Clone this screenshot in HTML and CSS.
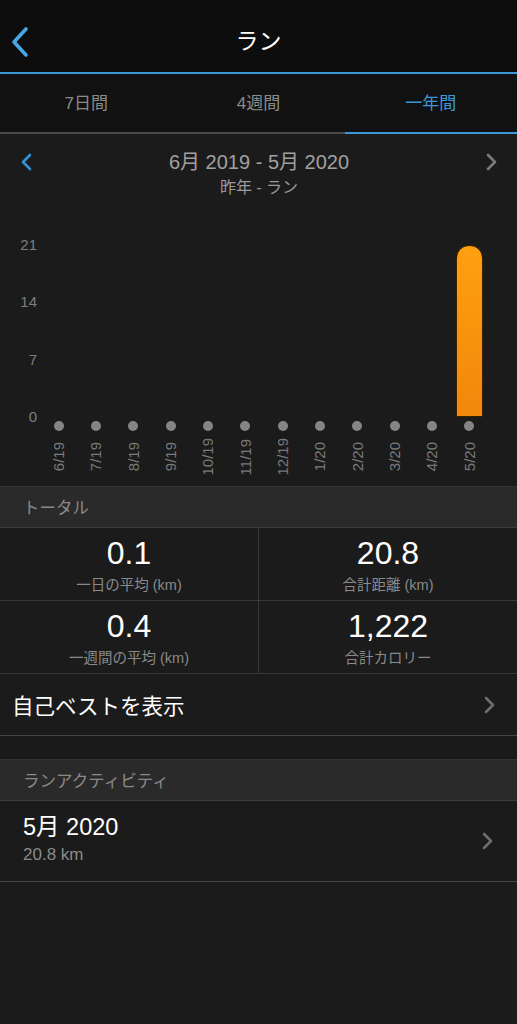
FILE: index.html
```html
<!DOCTYPE html>
<html lang="ja">
<head>
    <meta charset="UTF-8">
    <meta name="viewport" content="width=device-width, initial-scale=1.0">
    <title>ラン</title>
    <link rel="stylesheet" href="styles.css">
</head>
<body>
    <header class="top-bar">
        <svg class="back" width="20" height="32" viewBox="0 0 20 32"><path d="M16 3 L4 16 L16 29" fill="none" stroke="#46a6e8" stroke-width="3.6" stroke-linecap="round" stroke-linejoin="round"/></svg>
        <h1>ラン</h1>
        <span></span>
    </header>

    <nav class="tabs">
        <div class="tab">7日間</div>
        <div class="tab">4週間</div>
        <div class="tab active">一年間</div>
    </nav>

    <section class="chart-card">
        <div class="range">
            <svg width="14" height="20" viewBox="0 0 14 20"><path d="M10 3 L3 10 L10 17" fill="none" stroke="#2f93d6" stroke-width="2.6" stroke-linecap="round" stroke-linejoin="round"/></svg>
            <div class="range-text">
                <div class="range-title">6月 2019 - 5月 2020</div>
                <div class="range-sub">昨年 - ラン</div>
            </div>
            <svg width="14" height="20" viewBox="0 0 14 20"><path d="M4 3 L11 10 L4 17" fill="none" stroke="#7a7a7a" stroke-width="2.6" stroke-linecap="round" stroke-linejoin="round"/></svg>
        </div>

        <div class="chart">
            <div class="y-axis">
                <span>21</span>
                <span>14</span>
                <span>7</span>
                <span>0</span>
            </div>
            <div class="columns" id="columns"></div>
        </div>
    </section>

    <div class="section-head">トータル</div>
    <div class="stats">
        <div class="stat">
            <div class="stat-value">0.1</div>
            <div class="stat-label">一日の平均 (km)</div>
        </div>
        <div class="stat">
            <div class="stat-value">20.8</div>
            <div class="stat-label">合計距離 (km)</div>
        </div>
        <div class="stat">
            <div class="stat-value">0.4</div>
            <div class="stat-label">一週間の平均 (km)</div>
        </div>
        <div class="stat">
            <div class="stat-value">1,222</div>
            <div class="stat-label">合計カロリー</div>
        </div>
    </div>

    <div class="row best">
        <span>自己ベストを表示</span>
        <svg width="14" height="20" viewBox="0 0 14 20"><path d="M4 3 L11 10 L4 17" fill="none" stroke="#6e6e6e" stroke-width="2.6" stroke-linecap="round" stroke-linejoin="round"/></svg>
    </div>

    <div class="spacer"></div>

    <div class="section-head">ランアクティビティ</div>
    <div class="row activity">
        <div>
            <div class="activity-title">5月 2020</div>
            <div class="activity-sub">20.8 km</div>
        </div>
        <svg width="14" height="20" viewBox="0 0 14 20"><path d="M4 3 L11 10 L4 17" fill="none" stroke="#6e6e6e" stroke-width="2.6" stroke-linecap="round" stroke-linejoin="round"/></svg>
    </div>

    <script>
        const months = ['6/19', '7/19', '8/19', '9/19', '10/19', '11/19', '12/19', '1/20', '2/20', '3/20', '4/20', '5/20'];
        const values = [0, 0, 0, 0, 0, 0, 0, 0, 0, 0, 0, 20.8];
        const max = 21;

        const columns = document.getElementById('columns');
        months.forEach((m, i) => {
            const col = document.createElement('div');
            col.className = 'col';
            const h = values[i] / max * 174;
            col.innerHTML = `
                <div class="bar-area">${h > 0 ? `<div class="bar" style="height:${h}px"></div>` : ''}</div>
                <div class="dot"></div>
                <div class="x-label"><span>${m}</span></div>
            `;
            columns.appendChild(col);
        });
    </script>
</body>
</html>
```

FILE: styles.css
```css
* {
    box-sizing: border-box;
}

body {
    margin: 0;
    background: #1c1c1c;
    color: #fff;
    font-family: "Liberation Sans", "Noto Sans CJK JP", sans-serif;
    min-height: 1024px;
}

.top-bar {
    height: 74px;
    padding-top: 11px;
    background: #0d0d0d;
    border-bottom: 2px solid #3d97d6;
    display: grid;
    grid-template-columns: 50px 1fr 50px;
    align-items: center;
}

.top-bar .back {
    margin-left: 10px;
}

.top-bar h1 {
    margin: 0;
    text-align: center;
    font-size: 23px;
    font-weight: normal;
    line-height: 1;
}

.tabs {
    display: flex;
    background: #111;
    height: 60px;
    border-bottom: 2px solid #4a4a4a;
}

.tab {
    flex: 1;
    display: flex;
    align-items: center;
    justify-content: center;
    font-size: 17px;
    color: #8a8a8a;
    margin-bottom: -2px;
    padding-bottom: 3px;
    border-bottom: 2px solid transparent;
}

.tab.active {
    color: #3d97d6;
    border-bottom-color: #3d97d6;
}

.chart-card {
    background: #1b1b1b;
    padding-top: 16px;
    height: 352px;
}

.range {
    display: flex;
    align-items: flex-start;
    padding: 0 19px 0 20px;
}

.range svg {
    margin-top: 2px;
}

.range-text {
    flex: 1;
    text-align: center;
}

.range-title {
    font-size: 20px;
    color: #a0a0a0;
    line-height: 24px;
}

.range-sub {
    font-size: 16px;
    color: #9a9a9a;
    line-height: 20px;
    margin-top: 4px;
}

.chart {
    display: flex;
    margin-top: 39px;
}

.y-axis {
    width: 40px;
    height: 188px;
    padding-right: 3px;
    display: flex;
    flex-direction: column;
    justify-content: space-between;
    align-items: flex-end;
    font-size: 15px;
    color: #7e7e7e;
    line-height: 16px;
}

.columns {
    display: flex;
    width: 448px;
}

.col {
    flex: 1;
    display: flex;
    flex-direction: column;
    align-items: center;
}

.bar-area {
    height: 180px;
    width: 100%;
    display: flex;
    align-items: flex-end;
    justify-content: center;
}

.bar {
    width: 27px;
    border-radius: 13px 13px 0 0;
    background: linear-gradient(#ffa010, #f2870a);
    border: 1px solid #3a2200;
}

.dot {
    width: 10px;
    height: 10px;
    border-radius: 50%;
    background: #858585;
    margin-top: 4px;
}

.x-label {
    height: 42px;
    margin-top: 5px;
    display: flex;
    align-items: center;
}

.x-label span {
    writing-mode: vertical-rl;
    transform: rotate(180deg);
    font-size: 15px;
    color: #7a7a7a;
}

.section-head {
    height: 42px;
    background: #2a2a2a;
    border-top: 1px solid #333;
    border-bottom: 1px solid #3c3c3c;
    display: flex;
    align-items: center;
    padding-left: 23px;
    font-size: 16.5px;
    color: #8a8a8a;
}

.stats {
    display: grid;
    grid-template-columns: 259px 1fr;
    background: #1b1b1b;
}

.stat {
    height: 73px;
    border-bottom: 1px solid #383838;
    text-align: center;
    padding-top: 7px;
}

.stat:nth-child(odd) {
    border-right: 1px solid #383838;
}

.stat-value {
    font-size: 32px;
    line-height: 36px;
}

.stat-label {
    font-size: 14.5px;
    color: #8a8a8a;
    line-height: 18px;
    margin-top: 5px;
}

.row {
    display: flex;
    align-items: center;
    justify-content: space-between;
    background: #1b1b1b;
    border-bottom: 1px solid #444;
    padding-right: 21px;
}

.best {
    height: 62px;
    padding-left: 12px;
    font-size: 21.5px;
}

.spacer {
    height: 23px;
    background: #1a1a1a;
}

.activity {
    height: 81px;
    padding-left: 23px;
    padding-right: 23px;
}

.activity > div {
    padding-bottom: 4px;
}

.activity-title {
    font-size: 23.5px;
    line-height: 28px;
}

.activity-sub {
    font-size: 17px;
    color: #8a8a8a;
    line-height: 20px;
    margin-top: 4px;
}
```
